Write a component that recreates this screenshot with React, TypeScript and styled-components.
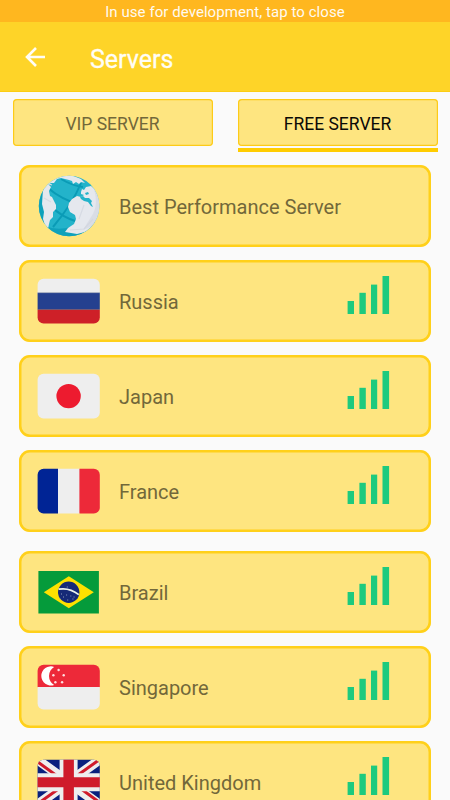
import React from "react";
import styled, { createGlobalStyle } from "styled-components";

const GlobalStyle = createGlobalStyle`
  * { box-sizing: border-box; }
  body { margin: 0; background: #fafafa; font-family: Roboto, sans-serif; }
`;

const Screen = styled.div`
  width: 450px;
  height: 800px;
  overflow: hidden;
  display: flex;
  flex-direction: column;
  background: #fafafa;
`;

const Banner = styled.div`
  height: 22px;
  flex: none;
  background: #ffb71f;
  color: #fffaf0;
  font-size: 15px;
  line-height: 24px;
  letter-spacing: 0.06px;
  text-align: center;
  white-space: nowrap;
`;

const Header = styled.header`
  height: 70px;
  flex: none;
  display: flex;
  align-items: center;
  padding: 6px 0 0 25px;
  background: #fed428;
  border-bottom: 1px solid #fccd12;
`;

const BackButton = styled.button`
  width: 21px;
  height: 22px;
  padding: 0;
  margin: 0 44px 5px 0;
  border: 0;
  background: none;
  svg { display: block; }
`;

const Title = styled.h1`
  margin: 0;
  color: #fffdf5;
  font-size: 25px;
  line-height: 30px;
  font-weight: 400;
  -webkit-text-stroke: 0.3px #fffdf5;
`;

const Tabs = styled.nav`
  flex: none;
  height: 73px;
  display: flex;
  gap: 25px;
  padding: 7px 12.5px 0;
`;

const TabSlot = styled.div<{ $active?: boolean }>`
  width: 200px;
  height: 53px;
  display: flex;
  flex-direction: column;
  justify-content: space-between;
  &::after {
    content: "";
    height: 4.5px;
    background: ${(p) => (p.$active ? "#ffcc00" : "transparent")};
  }
`;

const Tab = styled.button<{ $active?: boolean }>`
  display: block;
  width: 100%;
  height: 47px;
  padding: 2px 0 0;
  border: 0;
  box-shadow: inset 0 0 0 1.2px #fdcb18;
  border-radius: 4px;
  background: #fee580;
  color: ${(p) => (p.$active ? "#0b0a06" : "#72683a")};
  font: 400 17.5px Roboto, sans-serif;
`;

const List = styled.main`
  flex: none;
  display: flex;
  flex-direction: column;
  gap: 12.6px;
  padding: 0 19px;
`;

const Card = styled.div<{ $spaced?: boolean }>`
  height: 82.4px;
  flex: none;
  display: flex;
  align-items: center;
  margin-top: ${(p) => (p.$spaced ? "6px" : "0")};
  padding: 0 41px 0 18px;
  box-shadow: inset 0 0 0 2.5px #ffd01a;
  border-radius: 11px;
  background: #fee580;
`;

const Flag = styled.svg`
  display: block;
  flex: none;
  width: 63px;
  height: 62px;
  margin-right: 19px;
`;

const Name = styled.span`
  flex: 1;
  color: #72683a;
  font-size: 20px;
  line-height: 24px;
  padding-top: 1px;
  white-space: nowrap;
`;

const SignalIcon = styled.svg`
  display: block;
  flex: none;
  margin-bottom: 13px;
`;

const Signal = () => (
  <SignalIcon width="43" height="39" viewBox="0 0 43 39" fill="#1dca7e">
    <rect x="0.6" y="26" width="6.4" height="13" />
    <rect x="12.4" y="17.8" width="6.4" height="21.2" />
    <rect x="24" y="9.6" width="6.2" height="29.4" />
    <rect x="35.5" y="1" width="6.6" height="38" />
  </SignalIcon>
);

const Rounded = ({ id, children }: { id: string; children: React.ReactNode }) => (
  <Flag viewBox="0 0 63 62">
    <clipPath id={id}>
      <rect x="0.6" y="8.8" width="62.2" height="44.8" rx="6" />
    </clipPath>
    <g clipPath={`url(#${id})`}>{children}</g>
  </Flag>
);

const Globe = () => (
  <Flag viewBox="0 0 63 62">
    <clipPath id="globe">
      <circle cx="32.1" cy="31" r="30.3" />
    </clipPath>
    <g clipPath="url(#globe)">
      <path fill="#23b3ca" d="M0 0h63v62H0z" />
      <path fill="none" stroke="#0a9bb6" strokeWidth="2" d="M11 13Q25 25 44 30M14 31Q24 42 41 47M44 8Q36 28 16 52M24 4q12 7 22 8" />
      <path fill="#0a9bb6" d="M8 51q12 5 26 1l14 2 10-10v20H8zM0 16l7-4v38H0z" opacity=".75" />
      <path fill="#e5e8ee" d="M6 14 8 10h4l2 2-2 4 1 5 2 1 2 4 2 4v4l-3 3v5l-3 3-1 4-1 5-3-4-2-6 1-7-2-8z" />
      <path fill="#e5e8ee" d="m8 9 4-5L22 0h12l10 4 4 4-4-1-2 2-3-2-3 2-1-3-3-1-4-1-4-1-4 1-3 4-3 0-3 2-3 0-2 3-4-2z" />
      <path fill="#e5e8ee" d="m44 17 1-3 2 1 2-3 5-1 10 8v24L52 56l-12 3-12-2 3-4 6-4 2-5-1-4-5-3-2-5 1-4 3-4 5-3 4 1 3-2-3-1z" />
      <path fill="#23b3ca" d="m43 22 3-1 2 2 4 0 3 3-1 2 2 4-2-1-3-4-4-1-3-2zm5-4 3-1 1 2-3 1z" />
      <path fill="none" stroke="#d7dbe3" strokeWidth="1.2" d="m7 23 7 4M9 8l6 2M47 30 42 44M33 55l14-1 9-10" />
      <path fill="#cfd3de" opacity=".55" d="M57 14q5 17-3 28l-8 13 12-5 8-19z" />
    </g>
  </Flag>
);

const Russia = () => (
  <Rounded id="russia">
    <path fill="#eeeeee" d="M0 8h63v16H0z" />
    <path fill="#25408f" d="M0 22.8h63v17H0z" />
    <path fill="#ce2028" d="M0 39.8h63V54H0z" />
    <path stroke="#a6acbb" strokeWidth=".8" d="M0 22.6h63" />
  </Rounded>
);

const Japan = () => (
  <Rounded id="japan">
    <path fill="#eeeeee" d="M0 8h63v46H0z" />
    <circle cx="31.6" cy="31.1" r="12.2" fill="#ed1b2f" />
  </Rounded>
);

const France = () => (
  <Rounded id="france">
    <path fill="#002495" d="M0 8h21v46H0z" />
    <path fill="#eeeeee" d="M21 8h22v46H21z" />
    <path fill="#ed2939" d="M42.4 8H63v46H42.4z" />
  </Rounded>
);

const Brazil = () => (
  <Flag viewBox="-0.4 0 63 62">
    <path fill="#059b3b" d="M1 9.9h60.5v42.5H1z" />
    <path fill="#fee100" d="m6.4 31.3 25-16 25 16-25 16z" />
    <circle cx="31.3" cy="31.2" r="10.7" fill="#162a77" />
    <path fill="none" stroke="#edf3ed" strokeWidth="1.7" d="M21.2 28.2q11-1.9 20.2 5.5" />
    <path stroke="#a9b7cf" strokeWidth=".9" strokeLinecap="round" d="M24 33h.1m2 3h.1m3-2h.1m1 5h.1m3-4h.1m2 3h.1m1-2h.1m-14 2h.1m7-12h.1" />
  </Flag>
);

const Singapore = () => (
  <Rounded id="singapore">
    <path fill="#ed2939" d="M0 8h63v23.2H0z" />
    <path fill="#eeeeee" d="M0 31h63v23H0z" />
    <path fill="#fff" d="M17.1 10.9A9.6 9.6 0 1 0 17.1 29 10.6 10.6 0 0 1 17.1 10.9z" />
    <g fill="#fff" opacity=".85">
      <circle cx="21.6" cy="14" r="1.2" />
      <circle cx="16.4" cy="19.2" r="1.2" />
      <circle cx="26.7" cy="19.2" r="1.2" />
      <circle cx="18.4" cy="26.2" r="1.2" />
      <circle cx="25.1" cy="26.2" r="1.2" />
    </g>
  </Rounded>
);

const UnitedKingdom = () => (
  <Rounded id="uk">
    <path fill="#09207e" d="M0 8h63v46H0z" />
    <path stroke="#eeeeee" strokeWidth="9.5" d="m-1 7.8 65 46.8M64 7.8-1 54.6" />
    <path stroke="#cf1b2b" strokeWidth="3" d="M-1 9.7 27 30M64 7.5 36 27.5M-1 54 27 34M36 32l28 20.5" />
    <path fill="#eeeeee" d="M22.6 8h18v14.3H63v18H40.6V54h-18V40.3H0v-18h22.6z" />
    <path fill="#cf1b2b" d="M26.4 8h10.5v18.3H63v10H36.9V54H26.4V36.3H0v-10h26.4z" />
  </Rounded>
);

const servers = [
  { name: "Best Performance Server", Icon: Globe, signal: false },
  { name: "Russia", Icon: Russia, signal: true },
  { name: "Japan", Icon: Japan, signal: true },
  { name: "France", Icon: France, signal: true },
  { name: "Brazil", Icon: Brazil, signal: true, spaced: true },
  { name: "Singapore", Icon: Singapore, signal: true },
  { name: "United Kingdom", Icon: UnitedKingdom, signal: true },
];

export default function App() {
  return (
    <>
      <GlobalStyle />
      <Screen>
        <Banner>In use for development, tap to close</Banner>
        <Header>
          <BackButton aria-label="Back">
            <svg width="21" height="22" viewBox="0 0 21 22" fill="none" stroke="#fffdf5" strokeWidth="2.6">
              <path d="M20 11H2.5M11 2l-9 9 9 9" />
            </svg>
          </BackButton>
          <Title>Servers</Title>
        </Header>
        <Tabs>
          <TabSlot>
            <Tab>VIP SERVER</Tab>
          </TabSlot>
          <TabSlot $active>
            <Tab $active>FREE SERVER</Tab>
          </TabSlot>
        </Tabs>
        <List>
          {servers.map(({ name, Icon, signal, spaced }) => (
            <Card key={name} $spaced={spaced}>
              <Icon />
              <Name>{name}</Name>
              {signal && <Signal />}
            </Card>
          ))}
        </List>
      </Screen>
    </>
  );
}
